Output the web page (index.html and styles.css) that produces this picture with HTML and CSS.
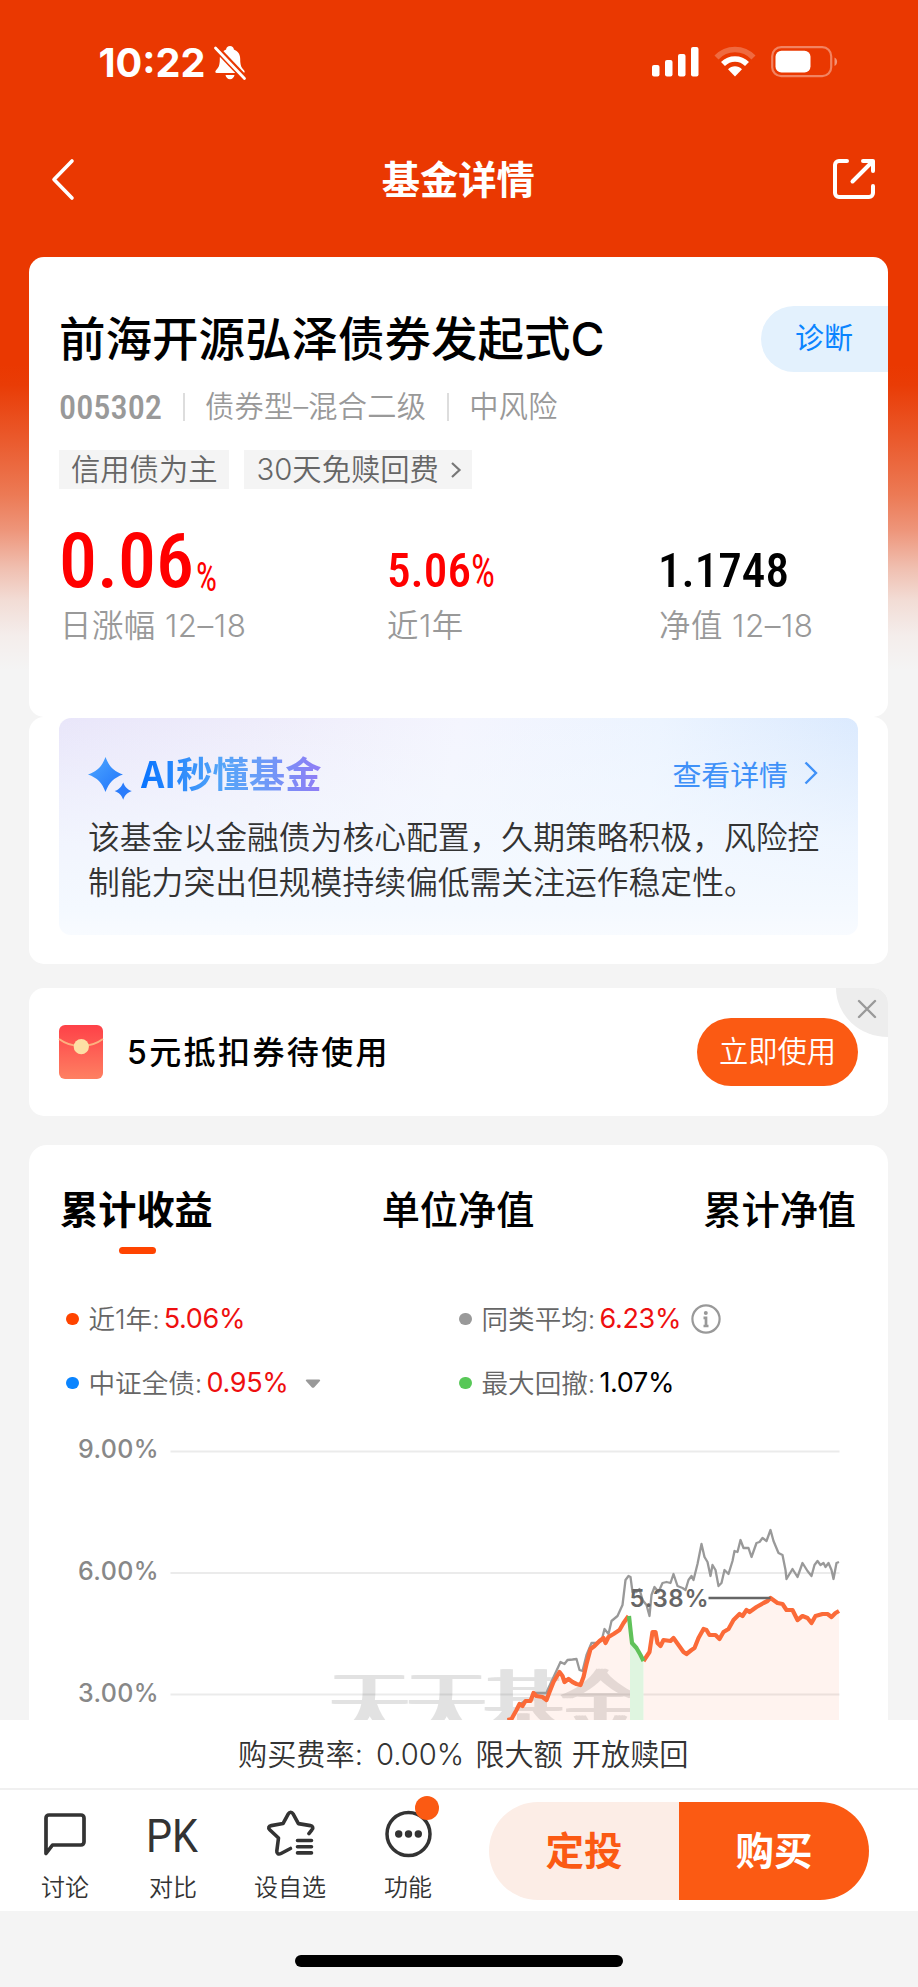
FILE: index.html
```html
<!DOCTYPE html>
<html lang="zh-CN">
<head>
<meta charset="utf-8">
<title>基金详情</title>
<link rel="stylesheet" href="styles.css">
</head>
<body>
<div class="page">
  <header class="status">
    <svg class="clock" width="110" height="40" viewBox="0 0 110 40"><text x="-.5" y="34.500" font-size="40" textLength="107" lengthAdjust="spacingAndGlyphs">10:22</text></svg>
    <svg class="bell" width="34" height="36" viewBox="0 0 34 36">
      <path d="M17 1c2.200 0 3.700 1.500 3.900 3.400 4 1.500 6.300 5 6.300 9.300 0 7 1.300 8.800 3.800 11.600 1.200 1.500.7 2.700-.8 2.700H3.800c-1.500 0-2-1.200-.8-2.700 2.500-2.800 3.800-4.600 3.800-11.600 0-4.300 2.300-7.800 6.300-9.300C13.300 2.500 14.800 1 17 1z" fill="#fff"/>
      <path d="M12.500 30h9c-.5 2.500-2.200 4.200-4.500 4.200s-4-1.700-4.500-4.200z" fill="#fff"/>
      <path d="M1.500 1.500 32 33.500" stroke="#ea3801" stroke-width="6.500"/>
      <path d="M2.500 3 31.500 33.500" stroke="#fff" stroke-width="2.800" stroke-linecap="round"/>
    </svg>
    <svg class="signal" width="48" height="30" viewBox="0 0 48 30" fill="#fff"><rect x="0" y="18" width="7.500" height="11.500" rx="2"/><rect x="13" y="13" width="7.500" height="16.500" rx="2"/><rect x="26" y="7" width="7.500" height="22.500" rx="2"/><rect x="39" y="0" width="7.500" height="29.500" rx="2"/></svg>
    <svg class="wifi" width="42" height="30" viewBox="0 0 42 30" fill="none" stroke="#fff">
      <path d="M2.500 10.500C12.500-.2 29.500-.2 39.500 10.500" stroke-width="5.500" opacity=".25"/>
      <path d="M9 17c6.600-6.800 17.400-6.800 24 0" stroke-width="5.500"/>
      <path d="M14 22.300c3.500-4.200 10.500-4.200 14 0L21 29.500z" fill="#fff" stroke="none"/>
    </svg>
    <svg class="battery" width="68" height="32" viewBox="0 0 68 32"><rect x="1.200" y="1.200" width="59" height="29" rx="9" fill="none" stroke="#fff" stroke-opacity=".38" stroke-width="2.200"/><rect x="4.500" y="4.800" width="35" height="21.600" rx="6" fill="#fff"/><path d="M63.500 11.500c3.500 1.500 3.500 7 0 8.500z" fill="#fff" opacity=".45"/></svg>
  </header>
  <nav class="nav">
    <svg width="24" height="42" viewBox="0 0 24 42" fill="none" stroke="#fff" stroke-width="3.600" stroke-linecap="round" stroke-linejoin="round"><path d="M21 2 3 20.500 21 39"/></svg>
    <h1>基金详情</h1>
    <svg width="44" height="42" viewBox="0 0 44 42" fill="none" stroke="#fff" stroke-width="4" stroke-linecap="round" stroke-linejoin="round"><path d="M15 2H7a4 4 0 0 0-4 4v28a4 4 0 0 0 4 4h30a4 4 0 0 0 4-4v-7M31 2H41v10M41 2 20.500 22.500"/></svg>
  </nav>

  <main class="content">
    <section class="card fund">
      <div class="fund-head"><h2>前海开源弘泽债券发起式C</h2><a class="diagnose">诊断</a></div>
      <div class="meta">
        <svg width="103" height="30" viewBox="0 0 103 30"><text x="0" y="27" font-size="34" textLength="103" lengthAdjust="spacingAndGlyphs">005302</text></svg>
        <i></i><span>债券型–混合二级</span><i></i><span>中风险</span>
      </div>
      <div class="tags"><span class="tag">信用债为主</span><span class="tag">30天免赎回费<svg width="12" height="18" viewBox="0 0 12 18" fill="none" stroke="#777" stroke-width="2.200"><path d="m2 2 7.500 7L2 16"/></svg></span></div>
      <div class="figures">
        <div class="figure"><svg width="200" height="66" viewBox="0 0 200 66" fill="#f00"><text x="0" y="60" font-size="76" textLength="135" lengthAdjust="spacingAndGlyphs">0.06</text><text class="unit" x="137" y="64" font-size="41" textLength="21" lengthAdjust="spacingAndGlyphs">%</text></svg><span>日涨幅 12–18</span></div>
        <div class="figure"><svg width="120" height="66" viewBox="0 0 120 66" fill="#f00"><text x="0" y="60" font-size="49" textLength="84" lengthAdjust="spacingAndGlyphs">5.06</text><text class="unit" x="84" y="59.500" font-size="47" textLength="24" lengthAdjust="spacingAndGlyphs">%</text></svg><span>近1年</span></div>
        <div class="figure"><svg width="140" height="66" viewBox="0 0 140 66"><text x="-1" y="60" font-size="49" textLength="131" lengthAdjust="spacingAndGlyphs">1.1748</text></svg><span>净值 12–18</span></div>
      </div>
    </section>

    <section class="card ai">
      <div class="ai-box">
        <div class="ai-head">
          <svg width="45" height="44" viewBox="0 0 45 44"><defs><linearGradient id="spark" x1="0" y1="0" x2="1" y2="1"><stop offset="0" stop-color="#4fa8ff"/><stop offset="1" stop-color="#1f73fb"/></linearGradient></defs><path fill="url(#spark)" d="M17.500 0c3.500 9.500 8 14 17.500 17.500-9.500 3.500-14 8-17.500 17.500C14 25.500 9.500 21 0 17.500 9.500 14 14 9.500 17.500 0z"/><path fill="#2b7cfb" d="M35.200 25.500c1.800 4.600 4 6.800 8.600 8.600-4.600 1.800-6.800 4-8.600 8.600-1.800-4.600-4-6.800-8.600-8.600 4.600-1.800 6.800-4 8.600-8.600z"/></svg>
          <h3>AI秒懂基金</h3>
          <a>查看详情<svg width="14" height="24" viewBox="0 0 14 24" fill="none" stroke="#3f91f8" stroke-width="2.400"><path d="m1.500 1.500 10.500 10.500L1.500 22.500"/></svg></a>
        </div>
        <p>该基金以金融债为核心配置，久期策略积极，风险控<br>制能力突出但规模持续偏低需关注运作稳定性。</p>
      </div>
    </section>

    <section class="card coupon">
      <svg width="44" height="54" viewBox="0 0 44 54"><defs><linearGradient id="env" x1="0" y1="0" x2="0" y2="1"><stop offset="0" stop-color="#fe4148"/><stop offset="1" stop-color="#fe8062"/></linearGradient></defs><rect width="44" height="54" rx="6" fill="url(#env)"/><path d="M0 14c13 9.500 31 9.500 44 0" fill="none" stroke="#fdb17f" stroke-width="2"/><circle cx="22.300" cy="21.700" r="7.600" fill="#fddfa4"/></svg>
      <span class="coupon-text">5元抵扣券待使用</span>
      <button class="use">立即使用</button>
      <span class="close"><svg width="20" height="20" viewBox="0 0 20 20" stroke="#999" stroke-width="2.400" stroke-linecap="round"><path d="m2 2 16 16M18 2 2 18"/></svg></span>
    </section>

    <section class="card chart">
      <div class="tabs"><span class="tab active">累计收益</span><span class="tab">单位净值</span><span class="tab">累计净值</span></div>
      <div class="legend">
        <div class="item"><b class="dot orange"></b><span>近1年:</span><em>5.06%</em></div>
        <div class="item"><b class="dot grey"></b><span>同类平均:</span><em>6.23%</em><svg class="info" width="30" height="30" viewBox="0 0 30 30"><circle cx="15" cy="15" r="13.600" fill="none" stroke="#999" stroke-width="2.200"/><circle cx="14.800" cy="9" r="2" fill="#999"/><path d="M12.500 13.800H15v8M12.500 22h5" fill="none" stroke="#999" stroke-width="2.700"/></svg></div>
        <div class="item"><b class="dot blue"></b><span>中证全债:</span><em>0.95%</em><svg class="drop" width="16" height="10" viewBox="0 0 16 10"><path d="M2 .5h12c1.300 0 1.500 1 .7 1.800L9.300 8.200c-.8.800-1.800.8-2.600 0L1.300 2.300C.5 1.500.7.5 2 .5z" fill="#999"/></svg></div>
        <div class="item"><b class="dot green"></b><span>最大回撤:</span><em class="dark">1.07%</em></div>
      </div>
      <div class="watermark">天天基金</div>
      <svg class="plot" width="859" height="300" viewBox="29.500 1420 859 300">
        <g stroke="#000" stroke-opacity=".08" stroke-width="2"><path d="M171 1451.500H840M171 1573H840M171 1694.500H840"/></g>
        <g class="axis" font-size="25"><text x="78.500" y="1458" textLength="80.500">9.00%</text><text x="78.500" y="1580" textLength="80.500">6.00%</text><text x="78.500" y="1701.500" textLength="80.500">3.00%</text></g>
        <path fill="#fb5a2a" fill-opacity=".075" d="M508 1720 517 1710 520 1704 531 1701 534 1693 547 1700 560 1672 565 1682 581 1685 591 1649 600 1641 614 1634 624 1623 629 1616 630.500 1628V1720zM644 1720V1661L650 1652 653 1632 656 1632 658 1643 661 1646 664 1640 671 1641 674 1638 679 1645 687 1654 695 1648 704 1629 710 1635 720 1639 729 1629 740 1614 757 1607 771 1598 783 1604 787 1610 793 1610 798 1620 808 1618 812 1623 816 1616 828 1614 832 1617 839.500 1611V1720z"/>
        <path fill="#dff5e0" d="M630.500 1628 633 1643 644 1661V1720H630.500z"/>
        <path fill="none" stroke="#999" stroke-width="2.300" stroke-linejoin="round" d="M508 1720 512 1719 517 1710 520 1704 526 1701 531 1701 534 1693 541 1693 547 1693 549 1688 555 1675 561 1662 565 1664 568 1660 573 1659.500 577 1659 580 1670 583 1671 587 1655 592 1643 597 1643 602 1641 605 1629 609 1634 612 1621 618 1616 623 1605 626 1580 629 1576 631 1577 633 1592 637 1592 640 1589 643 1600 647 1605 650 1616 652 1595 655 1587 659 1592 663 1583 667 1582 671 1583 674 1574 678 1586 683 1588 686 1590 689 1580 692 1576 694 1580 698 1564 702 1544 705 1557 708 1562 711 1576 713 1565 716 1570 719 1586 722 1583 725 1570 729 1574 733 1561 735 1551 738 1552 741 1540 744 1548 749 1548 752 1557 757 1543 760 1542 763 1538 767 1541 771 1530 774 1541 779 1553 783 1555 786 1570 787 1579 793 1569 798 1577 803 1563 808 1571 812 1576 815 1565 818 1561 821 1565 824 1563 826 1567 829 1563 832 1570 834 1579 837 1563 839.500 1562"/>
        <path fill="none" stroke="#fb6a38" stroke-width="4.200" stroke-linejoin="round" d="M508 1720 512 1719 517 1710 520 1704 523 1706 526 1701 531 1701 534 1693 537 1696 543 1697 547 1700 550 1692 554 1682 560 1672 563 1676 565 1682 569 1679 573 1682 577 1684 581 1685 584 1677 587 1664 591 1649 595 1646 600 1641 604 1638 606 1643 609 1637 614 1634 620 1630 624 1623 629 1616M644 1661 650 1652 653 1632 656 1632 658 1643 661 1646 664 1640 671 1641 674 1638 679 1645 684 1652 687 1654 692 1650 695 1648 699 1638 704 1629 707 1630 710 1635 716 1635 720 1639 724 1632 729 1629 734 1620 740 1614 743 1616 747 1610 750 1612 757 1607 764 1603 768 1601 771 1598 778 1603 783 1604 787 1610 793 1610 798 1620 803 1616 808 1618 812 1623 816 1616 823 1614 828 1614 832 1617 836 1613 839.500 1611"/>
        <path fill="none" stroke="#60c25a" stroke-width="4.200" stroke-linejoin="round" d="M629.500 1616 631 1630 632.500 1643 637 1648 641 1655 644 1661"/>
        <path d="M709 1598H771" stroke="#666" stroke-width="2.400"/>
        <text class="peak" x="630" y="1607" font-size="24" textLength="79">5.38%</text>
      </svg>
    </section>
  </main>

  <div class="fee"><span>购买费率:</span><em>0.00%</em><span>限大额</span><span>开放赎回</span></div>
  <footer class="bar">
    <div class="action a1"><svg width="48" height="50" viewBox="41 1808 48 50" fill="none" stroke="#333" stroke-width="3.700" stroke-linejoin="round"><path d="M46 1853.500V1818a3 3 0 0 1 3-3H81a3 3 0 0 1 3 3v24a3 3 0 0 1-3 3H52.500z"/></svg><span>讨论</span></div>
    <div class="action a2"><svg width="48" height="50" viewBox="0 0 48 50"><text x="-3" y="44" font-size="47" textLength="52" lengthAdjust="spacingAndGlyphs">PK</text></svg><span>对比</span></div>
    <div class="action a3"><svg width="52" height="50" viewBox="264 1808 52 50" fill="none" stroke="#333" stroke-width="3.600" stroke-linejoin="round" stroke-linecap="round"><path d="M290.500 1848.500 281 1853.500c-2.500 1.300-4.500 0-4.200-2.500l1.700-13-8.800-8.300c-1.800-1.700-1-3.700 1.500-4.100l11.800-2 5.300-9.700c1.300-2.300 3.500-2.300 4.800 0l5.300 9.700 12 2c2.500.5 3.200 2.500 1.500 4.200l-3 3.800M297.500 1840.500H311.500M297.500 1846.700H311.500M297.500 1852.900H311.500"/></svg><span>设自选</span></div>
    <div class="action a4"><svg width="48" height="50" viewBox="384 1808 48 50"><circle cx="408.500" cy="1834" r="21.500" fill="none" stroke="#333" stroke-width="3.500"/><g fill="#333"><circle cx="398.700" cy="1834" r="3.700"/><circle cx="408.500" cy="1834" r="3.700"/><circle cx="418.300" cy="1834" r="3.700"/></g></svg><b class="badge"></b><span>功能</span></div>
    <div class="buttons"><button class="invest">定投</button><button class="buy">购买</button></div>
  </footer>
  <div class="home"><i></i></div>
</div>
</body>
</html>
```
FILE: styles.css
```css
* { box-sizing: border-box; margin: 0; padding: 0; }
body { background: #fff; font-family: "Noto Sans CJK SC", sans-serif; color: #000; }
svg { display: block; flex: none; overflow: visible; }
em, i { font-style: normal; }
button { border: 0; font-family: inherit; }
.page { width: 917.5px; height: 1987px; display: flex; flex-direction: column; overflow: hidden;
  background: linear-gradient(#ea3801 0, #ea3801 365px, #e93c06 385px, #ea5a2d 440px, #ec7a55 495px, #ee957a 530px, #f0bfb0 568px, #f2dcd5 600px, #f4edeb 635px, #f4f4f4 670px, #f4f4f4 100%); }
.status { height: 122px; padding: 42px 0 0 99px; display: flex; align-items: flex-start; }
.clock { font-family: Inter, sans-serif; font-weight: 700; fill: #fff; }
.bell { margin: 3px 0 0 4px; }
.signal { margin: 5px 0 0 405px; }
.wifi { margin: 5px 0 0 14px; }
.battery { margin: 4px 0 0 15px; }
.nav { height: 135px; padding: 0 41px 19px 51px; display: flex; align-items: center; justify-content: space-between; color: #fff; }
.nav h1 { font-size: 38.300px; line-height: 50px; font-weight: 700; margin: -4px 0 0 9px; }
.content { height: 1463px; padding: 0 29px; flex: none; overflow: hidden; }
.card { width: 859px; background: #fff; border-radius: 15px; position: relative; }
.fund { height: 460px; padding: 49px 0 0 30px; }
.fund-head, .meta, .tag, .figure, .coupon-text, .item, .fee { font-family: Inter, "Noto Sans CJK SC", sans-serif; }
.fund-head { display: flex; align-items: center; justify-content: space-between; height: 66px; }
.fund-head h2 { font-size: 46.500px; font-weight: 500; line-height: 66px; white-space: nowrap; }
.diagnose { width: 127px; height: 66px; line-height: 66px; border-radius: 33px 0 0 33px; background: #e3f1fd; color: #0a84ff; font-size: 29px; padding-left: 34px; }
.meta { display: flex; align-items: center; height: 34px; margin-top: 18px; color: #999; font-size: 29.200px; line-height: 34px; font-weight: 350; }
.meta span { letter-spacing: .3px; }
.meta svg, .figure svg { font-family: "Roboto Condensed", Roboto, sans-serif; font-weight: 500; }
.meta svg { fill: #999; }
.meta i { width: 2px; height: 28px; background: #ddd; margin: 0 20px 0 21px; }
.tags { display: flex; gap: 15px; margin-top: 26px; }
.tag { display: flex; align-items: center; height: 39px; line-height: 39px; padding: 0 12px; background: #f4f4f4; color: #666; font-size: 29.300px; font-weight: 350; }
.tag svg { margin: 0 -2px 0 11px; }
.figures { display: flex; margin-top: 38px; }
.figure { width: 328px; color: #999; font-size: 31.400px; line-height: 44px; font-weight: 350; }
.figure:nth-child(2) { width: 272px; }
.figure:nth-child(3) { width: 200px; }
.figure span { display: block; margin: 11px 0 0 1px; letter-spacing: .5px; white-space: nowrap; }
.figure:nth-child(n+2) span { margin-left: 0; }
.figure .unit { font-weight: 400; }
.ai { height: 247px; padding: 1px 30px 0; }
.ai-box { height: 217px; border-radius: 12px; padding: 34px 29px 0;
  background: linear-gradient(rgba(246,250,255,0) 0, rgba(244,249,255,.75) 55%, #f4f9ff 88%, #f8fbff 100%), linear-gradient(100deg, #e9e6fa 0, #efedfb 25%, #f4f5fe 48%, #ecf4ff 72%, #d8e8fe 100%); }
.ai-head { display: flex; align-items: flex-start; height: 50px; }
.ai-head > svg { margin: 5px 8px 0 0; }
.ai-head h3 { font-size: 36.300px; line-height: 44px; margin-top: -2.500px; font-weight: 700; background: linear-gradient(90deg, #0873ff 0, #55a5f8 45%, #699df8 65%, #907cf5 100%); -webkit-background-clip: text; color: transparent; }
.ai-head a { margin: -1px 11px 0 auto; display: flex; align-items: center; gap: 16px; color: #3f91f8; font-size: 28.900px; line-height: 44px; }
.ai-box p { font-size: 31.800px; line-height: 44.500px; color: #333; font-weight: 350; margin-top: 11px; white-space: nowrap; }
.coupon { height: 128px; margin-top: 24px; padding: 0 30px; display: flex; align-items: center; overflow: hidden; }
.coupon-text { font-size: 32px; line-height: 46px; letter-spacing: 2.400px; font-weight: 500; margin: 1px 0 0 24px; }
.use { margin-left: auto; width: 161px; height: 68px; border-radius: 34px; background: #fb5a13; color: #fff; font-size: 29.300px; line-height: 62px; padding-bottom: 6px; font-weight: 350; }
.close { position: absolute; right: 0; top: 0; width: 52px; height: 49px; background: #ededed; border-bottom-left-radius: 100%; padding: 11px 0 0 21px; }
.chart { height: 575px; margin-top: 29px; border-radius: 18px 18px 0 0; }
.tabs { height: 130px; padding: 36px 32px 0 31px; display: flex; justify-content: space-between; }
.tab { font-size: 38.200px; line-height: 54px; font-weight: 500; height: 74px; position: relative; }
.active { font-weight: 700; }
.active::after { content: ""; position: absolute; left: 59px; top: 66px; width: 37px; height: 7px; border-radius: 4px; background: #ff4400; }
.legend { display: grid; grid-template-columns: 393px 1fr; grid-auto-rows: 64px; height: 145px; margin-top: 12px; padding-left: 37px; }
.item { display: flex; align-items: center; height: 64px; font-size: 26.600px; line-height: 38px; color: #666; font-weight: 350; }
.item span { margin: 0 4px 0 10px; }
.item em { font-weight: 400; font-size: 27px; color: #ee0f0f; letter-spacing: -.3px; }
.item em.dark { color: #000; }
.dot { width: 12.500px; height: 12.500px; border-radius: 50%; }
.orange { background: #ff4400; } .grey { background: #999; } .blue { background: #0a84ff; } .green { background: #58c858; }
.info { margin-left: 10px; } .drop { margin: 2px 0 0 16px; }
.plot { margin-top: -12px; position: relative; overflow: hidden; }
.axis { font-family: Inter, sans-serif; fill: #888; font-weight: 500; }
.peak { font-family: Inter, sans-serif; fill: #666; font-weight: 600; }
.watermark { position: absolute; left: 302px; top: 517px; font-size: 77px; line-height: 77px; color: #000; opacity: .11; font-weight: 300; white-space: nowrap;
  text-shadow: -4.500px 0 #000, -3px 0 #000, -1.500px 0 #000, 1.500px 0 #000, 3px 0 #000, 4.500px 0 #000; }
.fee { height: 70px; flex: none; width: 918px; background: #fff; border-bottom: 2px solid #f0f0f0; display: flex; align-items: center; padding: 1px 0 0 238px; font-size: 29.200px; line-height: 42px; font-weight: 350; color: #333; position: relative; }
.fee em { margin: 0 11px 0 13px; }
.fee span + span { margin-left: 9px; }
.bar { height: 121px; flex: none; width: 918px; background: #fff; display: flex; padding: 12px 49px 0 41px; }
.action { display: flex; flex-direction: column; align-items: center; height: 98px; padding-top: 6px; font-size: 24px; line-height: 34px; color: #333; font-weight: 350; position: relative; }
.action > span { margin-top: 11px; }
.a1 { width: 48px; } .a2 { width: 48px; margin-left: 60px; } .a3 { width: 72px; margin-left: 57px; } .a4 { width: 48px; margin-left: 58px; }
.a2 svg { font-family: Roboto, sans-serif; font-weight: 400; fill: #333; }
.badge { position: absolute; left: 31px; top: -6px; width: 24px; height: 24px; border-radius: 50%; background: #fb5a13; }
.buttons { margin-left: auto; width: 380px; height: 98px; border-radius: 49px; display: flex; overflow: hidden; }
.buttons button { width: 190px; font-size: 38.500px; font-weight: 700; padding-bottom: 7px; }
.invest { background: #fcede6; color: #fb5a13; } .buy { background: #fb5a13; color: #fff; }
.home { flex: 1; padding: 44px 0 0 295px; }
.home i { display: block; width: 328px; height: 12px; border-radius: 6px; background: #000; }
```
